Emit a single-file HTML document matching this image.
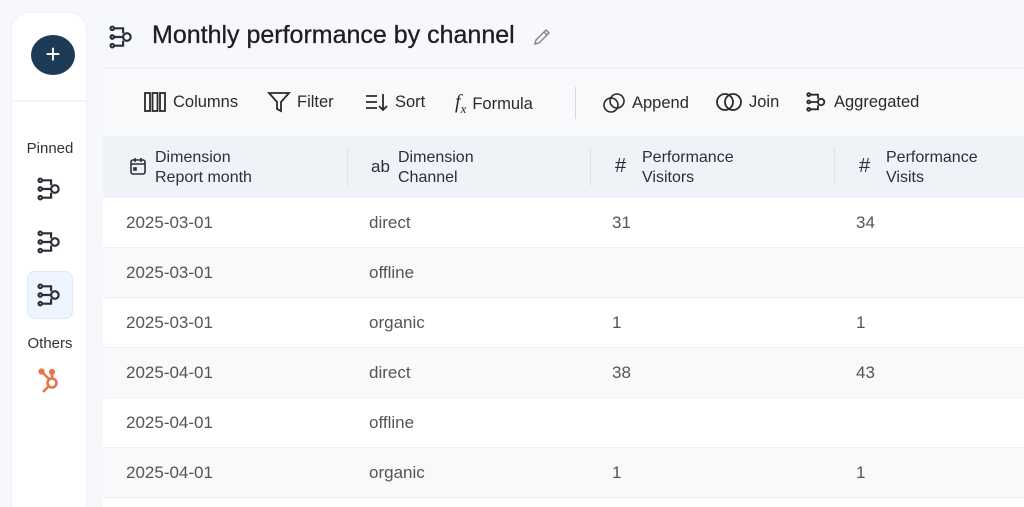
<!DOCTYPE html>
<html><head><meta charset="utf-8"><style>
*{margin:0;padding:0;box-sizing:border-box}
html,body{width:1024px;height:507px;overflow:hidden}
body{background:#f6f8fb;font-family:"Liberation Sans",sans-serif;position:relative;color:#222}
.side{position:absolute;left:11px;top:12px;width:76px;height:495px;background:#fff;border:1px solid #eef1f5;border-bottom:none;border-radius:18px 18px 0 0}
.plus{position:absolute;left:19px;top:22px;width:44px;height:40px;border-radius:50%;background:#1d3a57;color:#fff;font-size:26px;text-align:center;line-height:38px}
.sdiv{position:absolute;left:0;right:0;top:87px;height:2px;background:#f1f4f8}
.lbl{position:absolute;width:76px;text-align:center;font-size:15px;color:#333}
.si{position:absolute;left:24px}
.act{position:absolute;left:15px;top:258px;width:46px;height:48px;border-radius:8px;background:#eef5ff;border:1px solid #dde8f6}
.title{position:absolute;left:152px;top:21px;font-size:25px;color:#1e1e1e;-webkit-text-stroke:0.3px #1e1e1e}
.tb{position:absolute;left:103px;top:68px;width:921px;height:68px;background:#f8f9fb;border-top:1px solid #eef0f4}
.ti{position:absolute;top:22px;font-size:16.5px;color:#2a2a2a;display:flex;align-items:center;gap:6px}
.th{position:absolute;left:103px;top:136px;width:921px;height:62px;background:#eff2f7}
.hc{position:absolute;top:12px;font-size:16px;line-height:20px;color:#2a2f3a}
.hsep{position:absolute;top:12px;width:1px;height:38px;background:#dde1e8}
.row{position:absolute;left:103px;width:921px;height:50px;border-bottom:1px solid #eceff3;font-size:17px;color:#555}
.row span{position:absolute;top:15px}
</style></head><body>
<div class="side">
<div class="plus">+</div>
<div class="sdiv"></div>
<div class="lbl" style="top:127px">Pinned</div>
<div class="act"></div>
<svg class="si" style="top:163px" width="28" height="26" viewBox="0 0 24 24" fill="none" stroke="#2a2f3a" stroke-width="2"><circle cx="3" cy="4" r="1.6"/><circle cx="3" cy="12" r="1.6"/><circle cx="3" cy="20" r="1.6"/><path d="M4.6 4H13V8.5M4.6 12H12.5M4.6 20H13V15.5"/><circle cx="16.5" cy="12" r="3.5"/></svg>
<svg class="si" style="top:216px" width="28" height="26" viewBox="0 0 24 24" fill="none" stroke="#2a2f3a" stroke-width="2"><circle cx="3" cy="4" r="1.6"/><circle cx="3" cy="12" r="1.6"/><circle cx="3" cy="20" r="1.6"/><path d="M4.6 4H13V8.5M4.6 12H12.5M4.6 20H13V15.5"/><circle cx="16.5" cy="12" r="3.5"/></svg>
<svg class="si" style="top:269px" width="28" height="26" viewBox="0 0 24 24" fill="none" stroke="#2a2f3a" stroke-width="2"><circle cx="3" cy="4" r="1.6"/><circle cx="3" cy="12" r="1.6"/><circle cx="3" cy="20" r="1.6"/><path d="M4.6 4H13V8.5M4.6 12H12.5M4.6 20H13V15.5"/><circle cx="16.5" cy="12" r="3.5"/></svg>
<div class="lbl" style="top:322px">Others</div>
<svg style="position:absolute;left:26px;top:355px" width="24" height="26" viewBox="0 0 24 26" fill="none" stroke="#e8734a" stroke-width="2.6"><circle cx="14" cy="15" r="4.5"/><path d="M14 10.5V5M4 4l7 7M10 19l-5 5"/><circle cx="14" cy="4" r="1.8" fill="#e8734a"/><circle cx="3.5" cy="3.5" r="1.8" fill="#e8734a"/></svg>
</div>
<svg style="position:absolute;left:108px;top:24px" width="28" height="26" viewBox="0 0 24 24" fill="none" stroke="#2a2f3a" stroke-width="2"><circle cx="3" cy="4" r="1.6"/><circle cx="3" cy="12" r="1.6"/><circle cx="3" cy="20" r="1.6"/><path d="M4.6 4H13V8.5M4.6 12H12.5M4.6 20H13V15.5"/><circle cx="16.5" cy="12" r="3.5"/></svg>
<div class="title">Monthly performance by channel</div>
<svg style="position:absolute;left:532px;top:27px" width="20" height="20" viewBox="0 0 20 20" fill="none" stroke="#888" stroke-width="1.5"><path d="M3 17l1-4L14 3l3 3L7 16z M12 5l3 3"/></svg>
<div class="tb">
<div class="ti" style="left:40px"><svg width="24" height="22" viewBox="0 0 24 22" fill="none" stroke="#2a2a2a" stroke-width="1.8"><rect x="2" y="2" width="5" height="18"/><rect x="9.5" y="2" width="5" height="18"/><rect x="17" y="2" width="5" height="18"/></svg>Columns</div>
<div class="ti" style="left:164px"><svg width="24" height="22" viewBox="0 0 24 22" fill="none" stroke="#2a2a2a" stroke-width="1.8"><path d="M2 2h20l-8 9v9l-4-2v-7z"/></svg>Filter</div>
<div class="ti" style="left:262px"><svg width="24" height="22" viewBox="0 0 24 22" fill="none" stroke="#2a2a2a" stroke-width="1.8"><path d="M1 5h11M1 11h11M1 17h11M18 3v16M14 15l4 4 4-4"/></svg>Sort</div>
<div class="ti" style="left:352px"><span style="font-family:'Liberation Serif',serif;font-style:italic;font-size:20px">f<sub style="font-size:13px">x</sub></span>Formula</div>
<div style="position:absolute;left:472px;top:18px;width:1px;height:32px;background:#d5d9df"></div>
<div class="ti" style="left:499px"><svg width="24" height="24" viewBox="0 0 24 24" fill="none" stroke="#2a2a2a" stroke-width="1.6"><circle cx="9" cy="14" r="7"/><circle cx="15" cy="10" r="7"/></svg>Append</div>
<div class="ti" style="left:612px"><svg width="28" height="22" viewBox="0 0 28 22" fill="none" stroke="#2a2a2a" stroke-width="1.8"><circle cx="10" cy="11" r="8"/><circle cx="18" cy="11" r="8"/></svg>Join</div>
<div class="ti" style="left:703px"><svg width="22" height="22" viewBox="0 0 24 24" fill="none" stroke="#2a2a2a" stroke-width="2"><circle cx="3" cy="4" r="1.6"/><circle cx="3" cy="12" r="1.6"/><circle cx="3" cy="20" r="1.6"/><path d="M4.6 4H13V8.5M4.6 12H12.5M4.6 20H13V15.5"/><circle cx="16.5" cy="12" r="3.5"/></svg>Aggregated</div>
</div>
<div class="th">
<svg style="position:absolute;left:27px;top:21px" width="16" height="18" viewBox="0 0 16 18" fill="none" stroke="#2a2f3a" stroke-width="1.6"><rect x="1" y="3" width="14" height="14" rx="2"/><path d="M1 7h14M5 1v4M11 1v4"/><rect x="4" y="11" width="2" height="2" fill="#2a2f3a"/></svg>
<div class="hc" style="left:52px">Dimension<br>Report month</div>
<div class="hsep" style="left:244px"></div>
<div style="position:absolute;left:268px;top:21px;font-size:17px;color:#2a2f3a">ab</div>
<div class="hc" style="left:295px">Dimension<br>Channel</div>
<div class="hsep" style="left:487px"></div>
<div style="position:absolute;left:512px;top:19px;font-size:20px;color:#2a2f3a">#</div>
<div class="hc" style="left:539px">Performance<br>Visitors</div>
<div class="hsep" style="left:731px"></div>
<div style="position:absolute;left:756px;top:19px;font-size:20px;color:#2a2f3a">#</div>
<div class="hc" style="left:783px">Performance<br>Visits</div>
</div>
<div class="row" style="top:198px;background:#fff"><span style="left:23px">2025-03-01</span><span style="left:266px">direct</span><span style="left:509px">31</span><span style="left:753px">34</span></div>
<div class="row" style="top:248px;background:#f8f9fb"><span style="left:23px">2025-03-01</span><span style="left:266px">offline</span></div>
<div class="row" style="top:298px;background:#fff"><span style="left:23px">2025-03-01</span><span style="left:266px">organic</span><span style="left:509px">1</span><span style="left:753px">1</span></div>
<div class="row" style="top:348px;background:#f8f9fb"><span style="left:23px">2025-04-01</span><span style="left:266px">direct</span><span style="left:509px">38</span><span style="left:753px">43</span></div>
<div class="row" style="top:398px;background:#fff"><span style="left:23px">2025-04-01</span><span style="left:266px">offline</span></div>
<div class="row" style="top:448px;background:#f8f9fb"><span style="left:23px">2025-04-01</span><span style="left:266px">organic</span><span style="left:509px">1</span><span style="left:753px">1</span></div>
<div class="row" style="top:498px;height:9px;background:#fff;border-bottom:none"></div>
</body></html>
